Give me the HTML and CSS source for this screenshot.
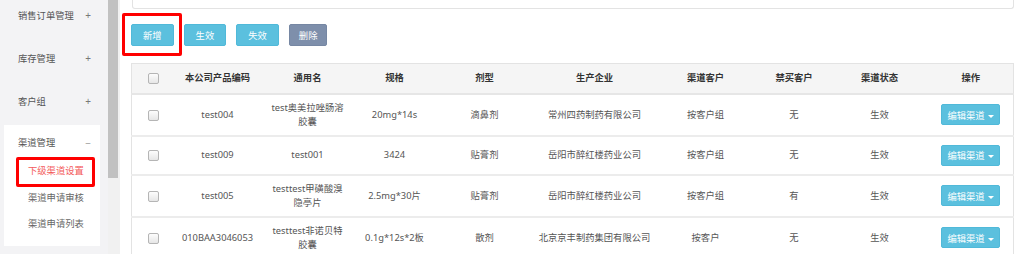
FILE: index.html
```html
<!DOCTYPE html>
<html lang="zh-CN">
<head>
    <meta charset="UTF-8">
    <title>下级渠道设置</title>
    <link rel="stylesheet" href="styles.css">
</head>
<body>
    <!-- Side menu -->
    <aside class="sidebar">
        <ul class="menu">
            <li class="menu-item"><span>销售订单管理</span><span class="sign">+</span></li>
            <li class="menu-item"><span>库存管理</span><span class="sign">+</span></li>
            <li class="menu-item"><span>客户组</span><span class="sign">+</span></li>
            <li class="menu-group">
                <div class="group-title"><span>渠道管理</span><span class="sign">−</span></div>
                <ul class="submenu">
                    <li class="sub-item active marked">下级渠道设置</li>
                    <li class="sub-item">渠道申请审核</li>
                    <li class="sub-item">渠道申请列表</li>
                </ul>
            </li>
        </ul>
    </aside>
    <div class="scrollbar"><div class="thumb"></div></div>

    <!-- Main content -->
    <main class="content">
        <div class="search-panel"></div>

        <div class="toolbar">
            <span class="marked"><button class="btn btn-info">新增</button></span>
            <button class="btn btn-info">生效</button>
            <button class="btn btn-info">失效</button>
            <button class="btn btn-muted">删除</button>
        </div>

        <table class="grid">
            <colgroup>
                <col style="width:44px"><col style="width:84px"><col style="width:96px"><col style="width:78px">
                <col style="width:102px"><col style="width:118px"><col style="width:104px"><col style="width:73px">
                <col style="width:98px"><col style="width:85px">
            </colgroup>
            <thead>
                <tr>
                    <th><input type="checkbox"></th>
                    <th>本公司产品编码</th>
                    <th>通用名</th>
                    <th>规格</th>
                    <th>剂型</th>
                    <th>生产企业</th>
                    <th>渠道客户</th>
                    <th>禁买客户</th>
                    <th>渠道状态</th>
                    <th>操作</th>
                </tr>
            </thead>
            <tbody>
                <tr>
                    <td><input type="checkbox"></td>
                    <td>test004</td>
                    <td class="name">test奥美拉唑肠溶胶囊</td>
                    <td>20mg*14s</td>
                    <td>滴鼻剂</td>
                    <td>常州四药制药有限公司</td>
                    <td>按客户组</td>
                    <td>无</td>
                    <td>生效</td>
                    <td><button class="btn btn-info btn-drop">编辑渠道 <span class="caret"></span></button></td>
                </tr>
                <tr>
                    <td><input type="checkbox"></td>
                    <td>test009</td>
                    <td class="name">test001</td>
                    <td>3424</td>
                    <td>贴膏剂</td>
                    <td>岳阳市醉红楼药业公司</td>
                    <td>按客户组</td>
                    <td>无</td>
                    <td>生效</td>
                    <td><button class="btn btn-info btn-drop">编辑渠道 <span class="caret"></span></button></td>
                </tr>
                <tr>
                    <td><input type="checkbox"></td>
                    <td>test005</td>
                    <td class="name">testtest甲磺酸溴隐亭片</td>
                    <td>2.5mg*30片</td>
                    <td>贴膏剂</td>
                    <td>岳阳市醉红楼药业公司</td>
                    <td>按客户组</td>
                    <td>有</td>
                    <td>生效</td>
                    <td><button class="btn btn-info btn-drop">编辑渠道 <span class="caret"></span></button></td>
                </tr>
                <tr>
                    <td><input type="checkbox"></td>
                    <td>010BAA3046053</td>
                    <td class="name">testtest非诺贝特胶囊</td>
                    <td>0.1g*12s*2板</td>
                    <td>散剂</td>
                    <td>北京京丰制药集团有限公司</td>
                    <td>按客户</td>
                    <td>无</td>
                    <td>生效</td>
                    <td><button class="btn btn-info btn-drop">编辑渠道 <span class="caret"></span></button></td>
                </tr>
            </tbody>
        </table>
    </main>
</body>
</html>
```

FILE: styles.css
```css
/* Basic reset */
* {
    margin: 0;
    padding: 0;
    box-sizing: border-box;
}

body {
    font-family: "Noto Sans", "Noto Sans CJK SC", sans-serif;
    font-size: 9.3px;
    color: #555;
    background: #fff;
    display: flex;
    height: 254px;
    overflow: hidden;
}

/* Side menu */
.sidebar {
    width: 108px;
    flex-shrink: 0;
    background: #f3f3f5;
}

.menu {
    list-style: none;
    margin-top: -7px;
}

.menu-item {
    height: 43px;
    display: flex;
    align-items: center;
    justify-content: space-between;
    padding: 0 17px 0 18px;
    color: #555;
}

.sign {
    font-size: 10px;
    color: #777;
}

.menu-group {
    background: #fff;
    margin: 3px 8px 0 4px;
    padding-bottom: 8px;
}

.group-title {
    height: 33px;
    padding: 11px 9px 0 14px;
    line-height: 14px;
    display: flex;
    justify-content: space-between;
}

.group-title .sign {
    color: #999;
}

.submenu {
    list-style: none;
}

.sub-item {
    height: 26.5px;
    line-height: 26.5px;
    padding-left: 24px;
    color: #666;
}

.sub-item.active {
    color: #f35a5a;
}

/* Red highlight frames */
.marked {
    position: relative;
    display: inline-block;
}

.sub-item.marked {
    display: block;
}

.marked::after {
    content: "";
    position: absolute;
    border: 3px solid #f00;
    border-radius: 2px;
}

.sub-item.marked::after {
    top: -1px;
    bottom: -2px;
    left: 12px;
    right: 5px;
}

.toolbar .marked::after {
    top: -11px;
    bottom: -10px;
    left: -9px;
    right: -8px;
}

/* Fake scrollbar of the menu */
.scrollbar {
    width: 12px;
    flex-shrink: 0;
    background: #f1f1f1;
}

.thumb {
    width: 10px;
    height: 178px;
    background: #c1c1c1;
}

/* Main area */
.content {
    flex: 1;
    padding: 0 3px 0 11px;
}

.search-panel {
    height: 9px;
    margin-left: 1px;
    border: 1px solid #e3e3e3;
    border-top: none;
    border-radius: 0 0 3px 3px;
}

.toolbar {
    display: flex;
    gap: 10px;
    margin-top: 15px;
    height: 22px;
}

.btn {
    font-family: inherit;
    font-size: 9.3px;
    color: #fff;
    border: 1px solid transparent;
    border-radius: 2px;
    height: 22px;
    padding: 0 11px;
    cursor: pointer;
}

.btn-info {
    background: #5bc0de;
    border-color: #50b9d9;
}

.btn-muted {
    background: #7e8fab;
    border-color: #7687a3;
    padding: 0 9px;
}

.btn-drop {
    height: 21px;
    width: 59px;
    padding: 0;
    margin: 2px 0;
    vertical-align: middle;
}

.caret {
    display: inline-block;
    width: 0;
    height: 0;
    margin-left: 1px;
    vertical-align: middle;
    border-top: 3px solid #fff;
    border-left: 3px solid transparent;
    border-right: 3px solid transparent;
}

/* Data table */
.grid {
    margin-top: 17px;
    width: 882px;
    table-layout: fixed;
    border-collapse: collapse;
    border: 1px solid #e3e3e3;
    text-align: center;
}

.grid th {
    height: 30px;
    background: #f5f5f5;
    color: #333;
    font-weight: bold;
    border-bottom: 2px solid #e6e6e6;
    line-height: 14px;
}

.grid td {
    padding: 6px 2px;
    line-height: 14px;
    border-bottom: 2px solid #ececec;
    color: #555;
    white-space: nowrap;
}

.grid td.name {
    padding: 6px 10px;
    white-space: normal;
}

/* Light rounded checkboxes */
.grid input[type="checkbox"] {
    appearance: none;
    width: 11px;
    height: 11px;
    vertical-align: middle;
    border: 1px solid #b5b5b5;
    border-radius: 2px;
    background: linear-gradient(#fdfdfd, #e6e6e6);
}
```
